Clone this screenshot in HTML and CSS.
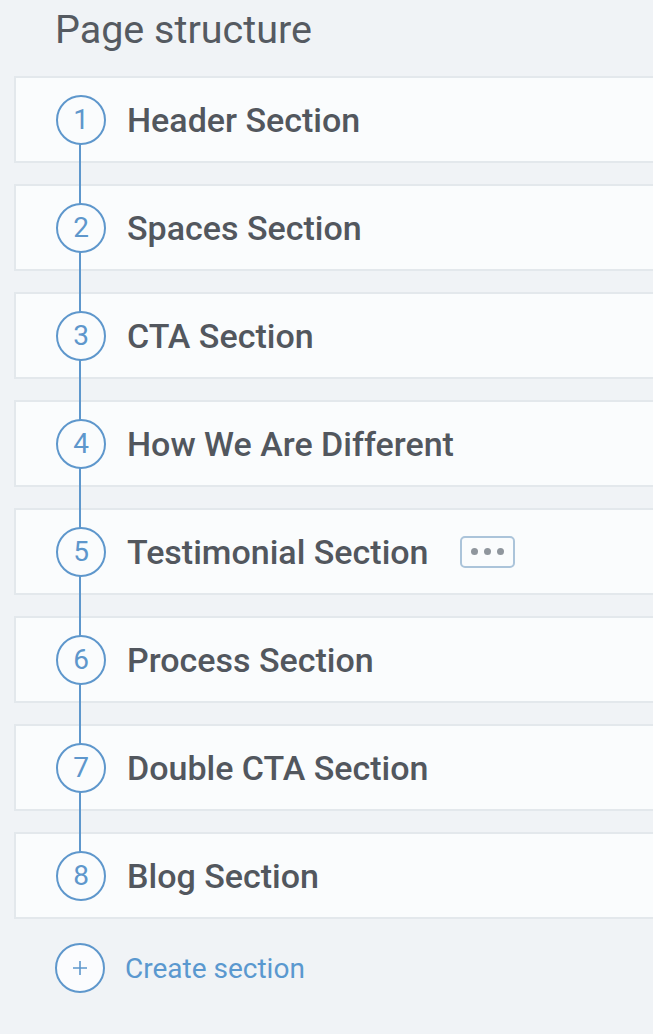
FILE: index.html
```html
<!DOCTYPE html>
<html lang="en">
<head>
    <meta charset="UTF-8">
    <meta name="viewport" content="width=device-width, initial-scale=1.0">
    <title>Page structure</title>
    <link rel="stylesheet" href="styles.css">
</head>
<body>
    <h1 class="page-title">Page structure</h1>

    <div class="section-list">
        <div class="timeline-line"></div>
        <div class="section-card">
            <div class="step">1</div>
            <div class="section-name">Header Section</div>
        </div>
        <div class="section-card">
            <div class="step">2</div>
            <div class="section-name">Spaces Section</div>
        </div>
        <div class="section-card">
            <div class="step">3</div>
            <div class="section-name">CTA Section</div>
        </div>
        <div class="section-card">
            <div class="step">4</div>
            <div class="section-name">How We Are Different</div>
        </div>
        <div class="section-card">
            <div class="step">5</div>
            <div class="section-name">Testimonial Section</div>
            <button class="more-btn"><span></span><span></span><span></span></button>
        </div>
        <div class="section-card">
            <div class="step">6</div>
            <div class="section-name">Process Section</div>
        </div>
        <div class="section-card">
            <div class="step">7</div>
            <div class="section-name">Double CTA Section</div>
        </div>
        <div class="section-card">
            <div class="step">8</div>
            <div class="section-name">Blog Section</div>
        </div>
    </div>

    <div class="create-row">
        <div class="step step-add">
            <svg width="14" height="14" viewBox="0 0 14 14"><path d="M7 0v14M0 7h14" stroke="#5e97cc" stroke-width="1.6" fill="none"/></svg>
        </div>
        <div class="create-label">Create section</div>
    </div>
</body>
</html>
```

FILE: styles.css
```css
* {
    margin: 0;
    padding: 0;
    box-sizing: border-box;
}
body {
    background-color: #f0f3f6;
    font-family: Roboto, "Liberation Sans", sans-serif;
    color: #52575e;
    overflow: hidden;
    height: 100vh;
}
.page-title {
    font-size: 39.5px;
    font-weight: 400;
    line-height: 46px;
    color: #555a61;
    padding: 7px 0 0 55px;
    height: 76px;
}
.section-list {
    position: relative;
    display: flex;
    flex-direction: column;
    gap: 21px;
    margin-left: 14px;
    margin-right: -20px;
}
/* 连接所有编号圆圈的竖线 */
.timeline-line {
    position: absolute;
    z-index: 1;
    left: 65px;
    top: 60px;
    bottom: 60px;
    width: 2px;
    background-color: #5e97cc;
}
.section-card {
    display: flex;
    align-items: center;
    height: 87px;
    background-color: #fafcfd;
    border: 2px solid #e3e8ec;
    padding-left: 40px;
}
.step {
    position: relative;
    z-index: 2;
    width: 50px;
    height: 50px;
    flex-shrink: 0;
    border: 2px solid #5e97cc;
    border-radius: 50%;
    background-color: #fafcfd;
    color: #5e97cc;
    font-size: 28px;
    display: flex;
    align-items: center;
    justify-content: center;
}
.section-name {
    margin-left: 21px;
    font-size: 34px;
    font-weight: 500;
    color: #52575e;
    white-space: nowrap;
}
.more-btn {
    margin-left: 31px;
    width: 55px;
    height: 32px;
    border: 2px solid #abc4da;
    border-radius: 5px;
    background-color: #fafcfd;
    display: flex;
    align-items: center;
    justify-content: center;
    gap: 6px;
}
.more-btn span {
    width: 7px;
    height: 7px;
    border-radius: 50%;
    background-color: #8f969d;
}
.create-row {
    display: flex;
    align-items: center;
    padding-left: 55px;
    margin-top: 24px;
}
.step-add {
    background-color: #fbfcfe;
}
.create-label {
    margin-left: 20px;
    font-size: 28px;
    color: #5a98cf;
}
```
